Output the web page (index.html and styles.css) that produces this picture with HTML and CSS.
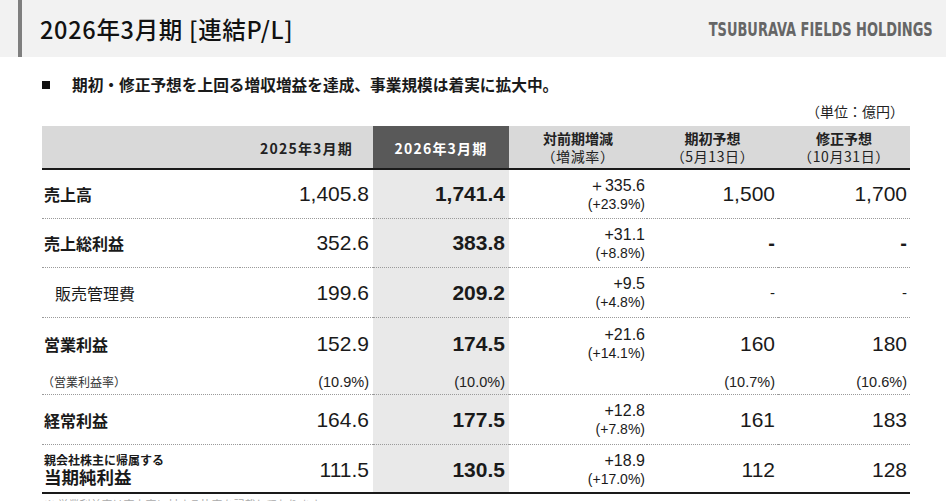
FILE: index.html
```html
<!DOCTYPE html>
<html lang="ja">
<head>
<meta charset="utf-8">
<title>2026年3月期 [連結P/L]</title>
<link rel="stylesheet" href="styles.css">
</head>
<body>
<header class="topbar">
  <h1 class="title">2026年3月期 [連結P/L]</h1>
  <div class="brand">TSUBURAVA FIELDS HOLDINGS</div>
</header>
<p class="lead"><span class="sq"></span>期初・修正予想を上回る増収増益を達成、事業規模は着実に拡大中。</p>
<div class="unit">（単位：億円）</div>
<table class="pl">
  <colgroup>
    <col class="c0"><col class="c1"><col class="c2"><col class="c3"><col class="c4"><col class="c5">
  </colgroup>
  <thead>
    <tr>
      <th></th>
      <th class="yr">2025年3月期</th>
      <th class="yr cur">2026年3月期</th>
      <th><div class="h1">対前期増減</div><div class="thin">（増減率）</div></th>
      <th><div class="h1">期初予想</div><div class="thin">（5月13日）</div></th>
      <th><div class="h1">修正予想</div><div class="thin">（10月31日）</div></th>
    </tr>
  </thead>
  <tbody>
    <tr class="r dot h48">
      <td class="lbl">売上高</td>
      <td class="num">1,405.8</td>
      <td class="num cur b">1,741.4</td>
      <td class="chg"><div>＋335.6</div><div class="pct">(+23.9%)</div></td>
      <td class="num">1,500</td>
      <td class="num">1,700</td>
    </tr>
    <tr class="r dot h48">
      <td class="lbl">売上総利益</td>
      <td class="num">352.6</td>
      <td class="num cur b">383.8</td>
      <td class="chg"><div>+31.1</div><div class="pct">(+8.8%)</div></td>
      <td class="num dash">-</td>
      <td class="num dash">-</td>
    </tr>
    <tr class="r dot h49">
      <td class="lbl sub">販売管理費</td>
      <td class="num">199.6</td>
      <td class="num cur b">209.2</td>
      <td class="chg"><div>+9.5</div><div class="pct">(+4.8%)</div></td>
      <td class="num dash sm">-</td>
      <td class="num dash sm">-</td>
    </tr>
    <tr class="r op">
      <td class="lbl">営業利益</td>
      <td class="num">152.9</td>
      <td class="num cur b">174.5</td>
      <td class="chg"><div>+21.6</div><div class="pct">(+14.1%)</div></td>
      <td class="num">160</td>
      <td class="num">180</td>
    </tr>
    <tr class="rate dot">
      <td class="lbl small">（営業利益率）</td>
      <td class="num pct">(10.9%)</td>
      <td class="num cur pct">(10.0%)</td>
      <td></td>
      <td class="num pct">(10.7%)</td>
      <td class="num pct">(10.6%)</td>
    </tr>
    <tr class="r dot h49">
      <td class="lbl">経常利益</td>
      <td class="num">164.6</td>
      <td class="num cur b">177.5</td>
      <td class="chg"><div>+12.8</div><div class="pct">(+7.8%)</div></td>
      <td class="num">161</td>
      <td class="num">183</td>
    </tr>
    <tr class="r last">
      <td class="lbl"><div class="pre">親会社株主に帰属する</div><div class="big">当期純利益</div></td>
      <td class="num">111.5</td>
      <td class="num cur b">130.5</td>
      <td class="chg"><div>+18.9</div><div class="pct">(+17.0%)</div></td>
      <td class="num">112</td>
      <td class="num">128</td>
    </tr>
  </tbody>
</table>
<p class="note">※ 営業利益率は売上高に対する比率を記載しております。</p>
</body>
</html>
```
FILE: styles.css
```css
* { box-sizing: content-box; }
html, body { margin: 0; padding: 0; background: #fff; }
body {
  width: 949px;
  height: 501px;
  overflow: hidden;
  color: #1a1a1a;
  font-family: "Noto Sans CJK JP", "Liberation Sans", sans-serif;
}

.topbar {
  height: 57px;
  background: #f2f2f2;
  display: flex;
  align-items: center;
  justify-content: space-between;
  padding: 0 13px 0 0;
  margin-right: 3px;
}
.title {
  margin: 0;
  height: 57px;
  display: flex;
  align-items: center;
  border-left: 4px solid #7f7f7f;
  margin-left: 18px;
  padding-left: 18px;
  font-size: 23.5px;
  font-weight: 500;
  letter-spacing: 0.7px;
  color: #111;
}
.brand {
  font-family: "DejaVu Sans", sans-serif;
  font-stretch: condensed;
  font-weight: bold;
  font-size: 19.5px;
  color: #666;
  padding-top: 2px;
  transform: scaleX(0.74);
  transform-origin: right center;
  white-space: nowrap;
}

.lead {
  margin: 17px 0 0 42px;
  height: 22px;
  line-height: 22px;
  font-size: 15.7px;
  font-weight: bold;
  display: flex;
  align-items: center;
}
.sq {
  display: inline-block;
  width: 8px;
  height: 8px;
  background: #111;
  margin-right: 22px;
}
.unit {
  margin: 7px 45px 0 0;
  height: 16px;
  line-height: 16px;
  text-align: right;
  font-size: 14px;
  color: #222;
}

.pl {
  margin: 7px 0 0 42px;
  width: 868px;
  table-layout: fixed;
  border-collapse: separate;
  border-spacing: 0;
}
.c0 { width: 198px; }
.c1 { width: 133px; }
.c2 { width: 136px; }
.c3 { width: 138px; }
.c4 { width: 131px; }
.c5 { width: 132px; }

.pl th {
  background: #d9d9d9;
  height: 42px;
  padding: 0;
  border-bottom: 2px solid #1a1a1a;
  font-size: 14px;
  font-weight: bold;
  line-height: 17px;
  text-align: center;
  vertical-align: middle;
  color: #222;
}
.pl th .h1 { line-height: 20px; height: 18px; overflow: visible; }
.pl th .thin { font-weight: normal; letter-spacing: 0.6px; line-height: 20px; height: 20px; }
.pl th.yr { letter-spacing: 1.2px; padding-top: 2px; height: 40px; }
.pl th.cur { background: #595959; color: #fff; }

.pl td {
  padding: 0;
  vertical-align: middle;
}
.pl td.cur { background: #e9e9e9; }

.dot td { border-bottom: 1px dotted #9a9a9a; }
.h48 td { height: 48px; }
.h49 td { height: 49px; }
.op td { padding-top: 4px; height: 43px; }
.rate td { height: 25px; padding-top: 4px; }
.last td { border-bottom: 2px solid #1a1a1a; padding-top: 2px; height: 45px; }

.lbl {
  font-size: 16px;
  font-weight: bold;
  padding-left: 2px !important;
  color: #1a1a1a;
}
.lbl.sub { padding-left: 13px !important; font-weight: normal; font-size: 16px; }
.lbl.small { font-size: 12px; font-weight: normal; padding-left: 0 !important; color: #333; }
.pre { font-size: 12px; line-height: 13px; font-weight: bold; }
.big { font-size: 17.5px; line-height: 21px; }

.num {
  font-family: "Liberation Sans", Arial, sans-serif;
  font-size: 21px;
  text-align: right;
  padding-right: 4px !important;
  color: #1a1a1a;
}
.num.b { font-weight: bold; }
.pl tr td:nth-child(5) { padding-right: 3px !important; }
.pl tr td:nth-child(6) { padding-right: 3px !important; }
.num.pct { font-size: 14.5px; color: #222; }
.dash { font-size: 20px; font-weight: bold; padding-right: 6px !important; }
.dash.sm { font-size: 15px; font-weight: normal; }

.chg {
  font-family: "Liberation Sans", Arial, sans-serif;
  text-align: right;
  padding-right: 2px !important;
  font-size: 16px;
  line-height: 19px;
  color: #1a1a1a;
}
.chg .pct { font-size: 14px; line-height: 18px; }

.note {
  margin: 3px 0 0 44px;
  font-size: 11px;
  color: #aaa;
  line-height: 14px;
}
```
